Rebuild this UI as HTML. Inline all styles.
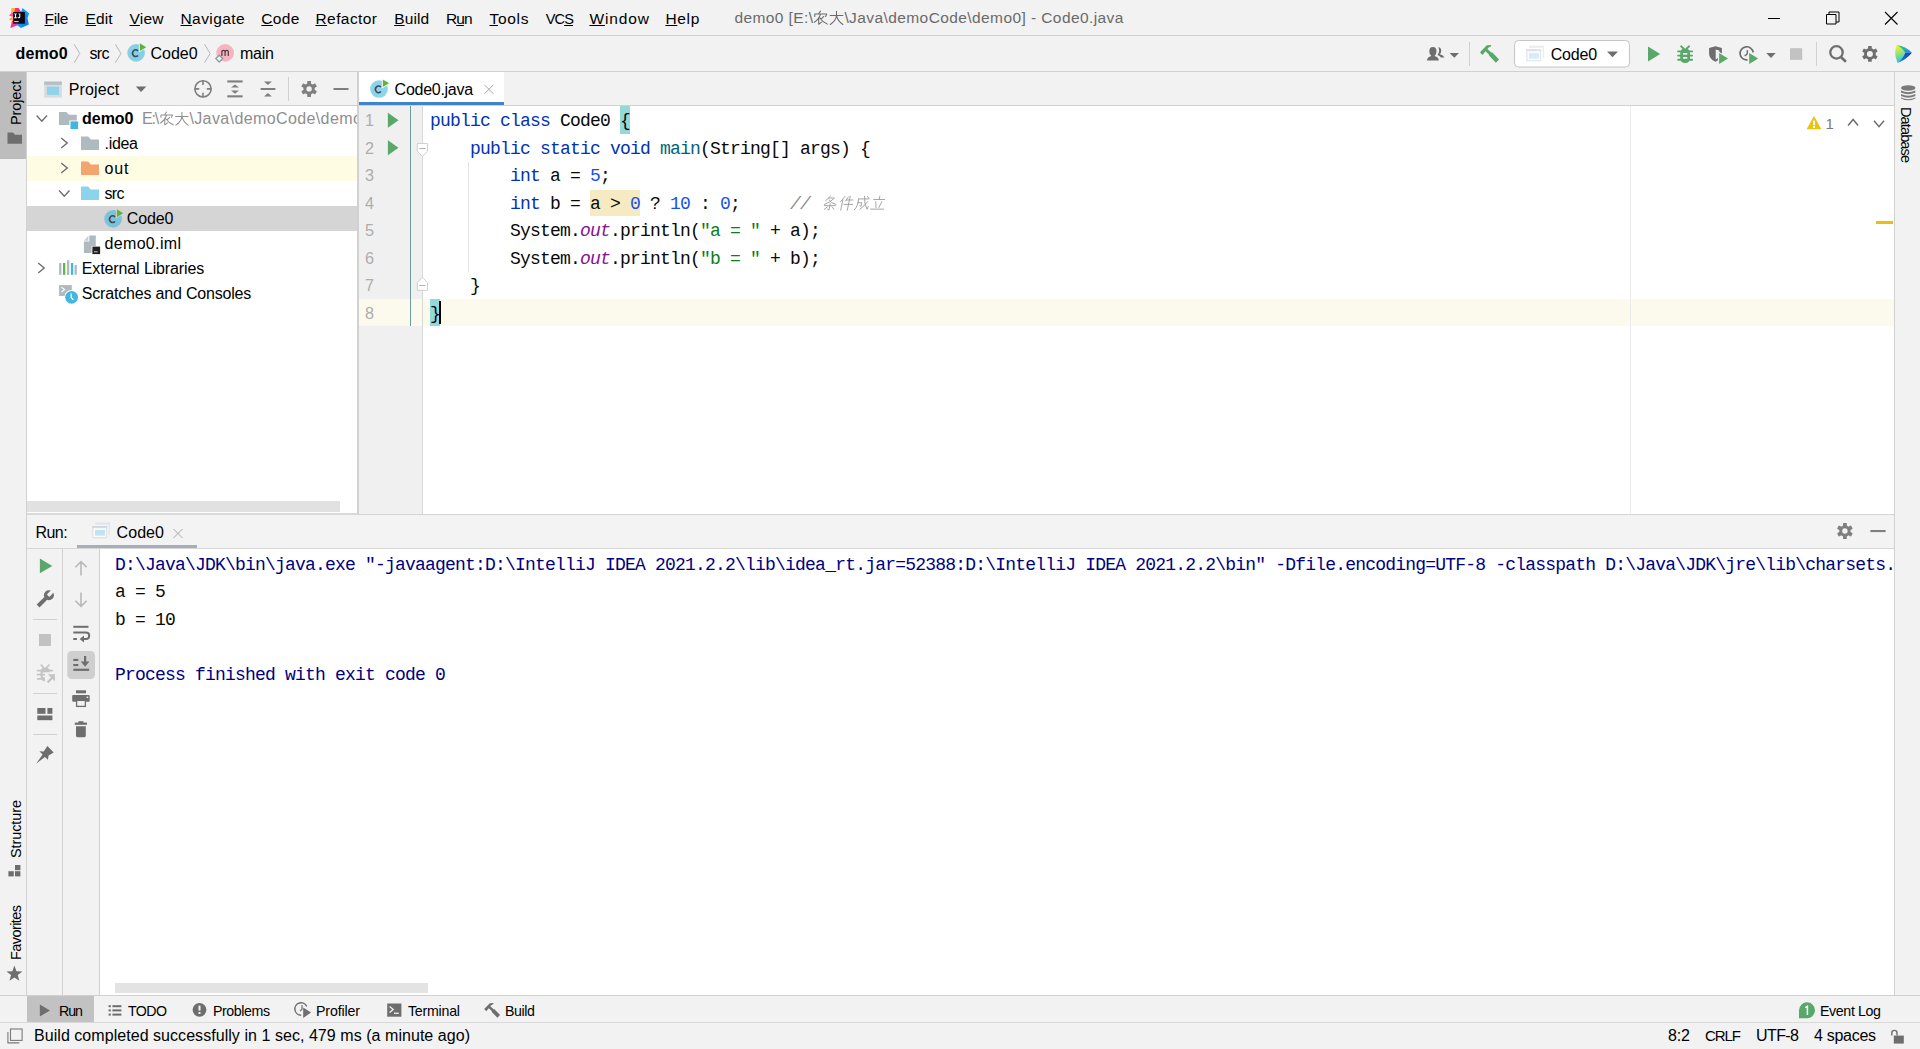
<!DOCTYPE html>
<html><head><meta charset="utf-8"><title>demo0 - Code0.java</title>
<style>
html,body{margin:0;padding:0;}
body{width:1920px;height:1049px;overflow:hidden;background:#f2f2f2;position:relative;font-family:"Liberation Sans",sans-serif;}
.b{position:absolute;}
.t{position:absolute;white-space:pre;line-height:20px;font-family:"Liberation Sans",sans-serif;}
svg{position:absolute;overflow:visible;}
u{text-decoration:underline;text-underline-offset:1px;text-decoration-thickness:1px;}
</style></head>
<body>
<div class="b" style="left:0px;top:0px;width:1920px;height:1049px;background:#f2f2f2;"></div>
<div class="b" style="left:0px;top:35px;width:1920px;height:1px;background:#d1d1d1;"></div>
<div class="b" style="left:0px;top:71px;width:1920px;height:1px;background:#d1d1d1;"></div>
<div class="b" style="left:0px;top:72px;width:27px;height:924px;background:#f2f2f2;"></div>
<div class="b" style="left:0px;top:72px;width:27px;height:87px;background:#bdbdbd;"></div>
<div class="b" style="left:26px;top:72px;width:1px;height:924px;background:#d1d1d1;"></div>
<div class="b" style="left:27px;top:72px;width:331px;height:443px;background:#f2f2f2;"></div>
<div class="b" style="left:27px;top:105px;width:331px;height:1px;background:#d1d1d1;"></div>
<div class="b" style="left:27px;top:106px;width:331px;height:394px;background:#fff;"></div>
<div class="b" style="left:27px;top:156px;width:331px;height:25px;background:#fffce4;"></div>
<div class="b" style="left:27px;top:206px;width:331px;height:25px;background:#d5d5d5;"></div>
<div class="b" style="left:27px;top:500px;width:331px;height:13px;background:#fff;"></div>
<div class="b" style="left:27px;top:501px;width:313px;height:11px;background:#e1e1e1;"></div>
<div class="b" style="left:357px;top:72px;width:2px;height:443px;background:#d1d1d1;"></div>
<div class="b" style="left:359px;top:72px;width:1535px;height:34px;background:#f2f2f2;"></div>
<div class="b" style="left:359px;top:72px;width:145px;height:33px;background:#fff;"></div>
<div class="b" style="left:359px;top:102px;width:145px;height:3.6px;background:#4083c9;"></div>
<div class="b" style="left:359px;top:105px;width:1535px;height:1px;background:#d1d1d1;"></div>
<div class="b" style="left:359px;top:106px;width:1535px;height:409px;background:#fff;"></div>
<div class="b" style="left:359px;top:106px;width:63px;height:409px;background:#f0f0f0;"></div>
<div class="b" style="left:359px;top:298.5px;width:1535px;height:27.5px;background:#fcfaed;"></div>
<div class="b" style="left:359px;top:298.5px;width:63px;height:27.5px;background:#fcfaed;"></div>
<div class="b" style="left:410px;top:106px;width:1px;height:220px;background:#6b9c9a;"></div>
<div class="b" style="left:422px;top:106px;width:1px;height:409px;background:#d9d9d9;"></div>
<div class="b" style="left:1630px;top:106px;width:1px;height:409px;background:#ececec;"></div>
<div class="b" style="left:1876px;top:221px;width:17px;height:3px;background:#e9bf0b;"></div>
<div class="b" style="left:1894px;top:72px;width:26px;height:924px;background:#f2f2f2;"></div>
<div class="b" style="left:1894px;top:72px;width:1px;height:924px;background:#d1d1d1;"></div>
<div class="b" style="left:27px;top:513px;width:331px;height:2px;background:#d9d9d9;"></div>
<div class="b" style="left:359px;top:514px;width:1535px;height:1px;background:#d4d4d4;"></div>
<div class="b" style="left:27px;top:515px;width:1867px;height:33px;background:#f3f3f3;"></div>
<div class="b" style="left:76.5px;top:545px;width:120px;height:3.3px;background:#a6aebd;"></div>
<div class="b" style="left:27px;top:548px;width:1867px;height:1px;background:#d6d6d6;"></div>
<div class="b" style="left:27px;top:549px;width:1867px;height:446px;background:#fff;"></div>
<div class="b" style="left:27px;top:549px;width:35px;height:446px;background:#f2f2f2;"></div>
<div class="b" style="left:62px;top:549px;width:1px;height:446px;background:#d1d1d1;"></div>
<div class="b" style="left:63px;top:549px;width:36px;height:446px;background:#f2f2f2;"></div>
<div class="b" style="left:99px;top:549px;width:1px;height:446px;background:#d1d1d1;"></div>
<div class="b" style="left:115px;top:983px;width:313px;height:10px;background:#e3e3e3;"></div>
<div class="b" style="left:0px;top:995px;width:1920px;height:1px;background:#d1d1d1;"></div>
<div class="b" style="left:0px;top:996px;width:1920px;height:26px;background:#f2f2f2;"></div>
<div class="b" style="left:27px;top:996px;width:67px;height:26px;background:#c2c2c2;"></div>
<div class="b" style="left:0px;top:1022px;width:1920px;height:2px;background:#dadada;"></div>
<div class="b" style="left:0px;top:1023px;width:1920px;height:26px;background:#f2f2f2;"></div>
<div class="b" style="left:620px;top:106px;width:10px;height:27.5px;background:#93d9d9;"></div>
<div class="b" style="left:430px;top:298.5px;width:10px;height:27.5px;background:#93d9d9;"></div>
<div class="b" style="left:590px;top:190px;width:50px;height:26px;background:#f5eac1;"></div>
<div class="b" style="left:439.3px;top:301px;width:2px;height:23px;background:#000;"></div>
<div class="b" style="left:468px;top:162px;width:1px;height:110px;background:#e4e4e4;"></div>
<div class="b" style="left:100px;top:548px;width:1793px;height:440px;overflow:hidden;"><span class="t" style="left:15px;top:6.50px;font-family:'Liberation Mono',monospace;font-size:18px;letter-spacing:-0.8px;color:#00007f;">D:\Java\JDK\bin\java.exe "-javaagent:D:\IntelliJ IDEA 2021.2.2\lib\idea_rt.jar=52388:D:\IntelliJ IDEA 2021.2.2\bin" -Dfile.encoding=UTF-8 -classpath D:\Java\JDK\jre\lib\charsets.jar;</span></div>
<svg style="left:0;top:0" width="1920" height="1049" viewBox="0 0 1920 1049"><defs>
<linearGradient id="lg1" x1="0" y1="0" x2="1" y2="0"><stop offset="0" stop-color="#ff2d6f"/><stop offset="1" stop-color="#e83ae0"/></linearGradient><linearGradient id="lg1o" x1="0" y1="0" x2="1" y2="0"><stop offset="0" stop-color="#ff7a1a"/><stop offset="1" stop-color="#ffcf1f"/></linearGradient>
<linearGradient id="lg2" x1="0.9" y1="0" x2="0.3" y2="1"><stop offset="0" stop-color="#0adfff"/><stop offset=".3" stop-color="#0893fb"/><stop offset=".7" stop-color="#087cfa"/><stop offset="1" stop-color="#0a9dff"/></linearGradient>
<linearGradient id="lg3" x1="0" y1="0" x2="0" y2="1"><stop offset="0" stop-color="#ff45c8"/><stop offset=".5" stop-color="#ffb300"/><stop offset="1" stop-color="#ff2d6f"/></linearGradient>
<linearGradient id="lg4" x1="0.3" y1="0" x2="0.5" y2="1"><stop offset="0" stop-color="#fbf22a"/><stop offset=".5" stop-color="#8fe07a"/><stop offset="1" stop-color="#14c4f0"/></linearGradient>
<linearGradient id="lg5" x1="0" y1="0" x2="1" y2="1"><stop offset="0" stop-color="#35d36a"/><stop offset=".55" stop-color="#1fb0b8"/><stop offset="1" stop-color="#1a7ee6"/></linearGradient>
<linearGradient id="lg6" x1="1" y1="0" x2="0" y2="1"><stop offset="0" stop-color="#1d3fae"/><stop offset=".6" stop-color="#1467d2"/><stop offset="1" stop-color="#0fa0ea"/></linearGradient>
</defs>
<polygon points="11.5,8 15.2,8 14,12.5 11,13.6" fill="#ffb02e"/>
<polygon points="15.2,8 18.5,8 21.2,12 13.2,12.6 14,12.5" fill="#ff2d78"/>
<polygon points="11,13.6 14,12.3 14,17.2 9,15.6" fill="#ff45bf"/>
<polygon points="9,19.6 11.6,17.4 14,17 14,21.8 12,20.4" fill="url(#lg1o)"/>
<polygon points="12,20.4 14,21.6 14,23 18.5,23.4 17,25.6 10.4,27.9" fill="url(#lg1)"/>
<polygon points="22.5,8 29.2,13.2 27.5,18 28.8,24.4 21,28 16.8,25 18,23 24,23 24,12 21.2,12" fill="url(#lg2)"/>
<rect x="13.2" y="12" width="11.7" height="11.7" fill="#100810"/>
<path d="M14.2,13.4h2.6v.9h-.75v3h.75v.9h-2.6v-.9h.75v-3h-.75z M18.4,13.4h1.9v3.3q0,1.5-1.5,1.5q-.9,0-1.4-.7l.6-.6q.3.4.75.4q.55,0,.55-.7v-2.3h-.9z" fill="#fff"/>
<rect x="14.2" y="21.2" width="4.4" height=".9" fill="#fff"/>
<path d="M1768,18.5h12" stroke="#000" stroke-width="1"/>
<path d="M1826.5,14.5h9.5v9.5h-9.5z M1829,14.5v-2.5h10v10h-3" fill="none" stroke="#000" stroke-width="1"/>
<path d="M1885,12l12.5,12.5M1897.5,12l-12.5,12.5" stroke="#000" stroke-width="1.1"/>
<polyline points="74.2,44.3 79.8,53.5 74.2,62.7" fill="none" stroke="#b3b7ba" stroke-width="1"/>
<polyline points="115.4,44.3 121.0,53.5 115.4,62.7" fill="none" stroke="#b3b7ba" stroke-width="1"/>
<polyline points="204.5,44.3 210.10000000000002,53.5 204.5,62.7" fill="none" stroke="#b3b7ba" stroke-width="1"/>
<circle cx="136.1" cy="52.9" r="8.8" fill="#40b6e0" fill-opacity=".6"/><path d="M137.97,50.90 A3.1,3.4 0 1 0 137.97,55.50" fill="none" stroke="#3d4a55" stroke-width="1.5"/><polygon points="139.0,41.9 147.7,47.199999999999996 139.0,52.3" fill="#f2f2f2"/><polygon points="139.9,43.3 146.2,47.199999999999996 139.9,51.0" fill="#5fb336"/>
<circle cx="225.2" cy="52.9" r="8.8" fill="#f98b9e" fill-opacity=".6"/>
<path d="M221.9,56v-5.6 M221.9,52 q.3,-1.6 1.7,-1.6 q1.5,0 1.5,1.7 v3.9 M225.1,52 q.3,-1.6 1.7,-1.6 q1.5,0 1.5,1.7 v3.9" fill="none" stroke="#4a3a40" stroke-width="1.2"/>
<path d="M219.2,55.2l3.4,3.4l-3.4,3.4l-3.4,-3.4z" fill="#f2f2f2" stroke="#8a9aa5" stroke-width="1.3"/>
<path d="M1427,60.6 q0,-3.5 4.3,-4.6 q-2,-1.6 -2,-4.8 q0,-4.3 3.6,-4.3 q3.6,0 3.6,4.3 q0,3.2 -2,4.8 q4.3,1.1 4.3,4.6 z" fill="#6e6e6e"/>
<path d="M1438.3,47.2 q2.9,.2 2.9,3.6 q0,2.2 -1.3,3.4 q3.6,1 4.6,3.4 h-3.6 q-.9,-1.9 -3.4,-2.6 q1.6,-1.6 1.6,-4.2 q0,-2.2 -.8,-3.6z" fill="#6e6e6e"/>
<polygon points="1449.6,53 1459,53 1454.3,57.8" fill="#6e6e6e"/>
<rect x="1469" y="42" width="1" height="24" fill="#d1d1d1"/>
<g transform="translate(1480,45) scale(1.0)" fill="#59a869"><polygon points="0,7.3 6.8,0.2 11.1,0.1 11.1,1.3 7.9,3 7.6,4.2 11.3,7.6 12.4,7.6 19.1,14.6 15.9,17.7 9.2,10.7 8.9,9.4 5.5,6.2 2.4,9.9"/></g>
<rect x="1514.5" y="40.5" width="115" height="26.5" rx="4" fill="#fff" stroke="#c4c4c4"/>
<path d="M1529.2,45.5h14.8v12.2h-1.2v-10h-13.6z" fill="#e9edf0"/><rect x="1526.2" y="49.1" width="15" height="12.3" fill="#e3e8ec"/><rect x="1526.2" y="49.1" width="15" height="2.2" fill="#dde3e8"/><rect x="1527.5" y="51.3" width="12.4" height="8.8" fill="#fdfdfd"/><rect x="1529.0" y="52.9" width="9.9" height="5.9" fill="#d6edf7"/>
<polygon points="1607,51.5 1618,51.5 1612.5,57.3" fill="#6e6e6e"/>
<polygon points="1648,46.5 1660.2,54 1648,61.5" fill="#59a869"/>
<g transform="translate(1685.1,48.4)" fill="#59a869" stroke="#59a869" stroke-linecap="round"><path d="M-4.9,5.4 q0,-5.4 4.9,-5.4 q4.9,0 4.9,5.4 v3.6 q0,5.7 -4.9,5.7 q-4.9,0 -4.9,-5.7z" stroke="none"/><path d="M-4,-2.1l2.6,2.4 M4,-2.1l-2.6,2.4 M-7,3h4 M7,3h-4 M-7,7.2h4 M7,7.2h-4 M-7,11.4h4 M7,11.4h-4" stroke-width="1.9" fill="none"/></g><rect x="1682.8999999999999" y="53.0" width="4.4" height="1.7" fill="#f2f2f2"/><rect x="1682.8999999999999" y="57.0" width="4.4" height="1.75" fill="#f2f2f2"/>
<path d="M1709.1,48.1 L1715.5,46.2 L1721.9,48.1 V54 Q1721.9,59 1715.5,61.7 Q1709.1,59 1709.1,54z" fill="#6e6e6e"/>
<path d="M1715.7,49.6 L1719.3,50.5 V55 Q1719,58 1715.7,59.4z" fill="#f2f2f2"/>
<polygon points="1717.9,50.9 1729.8,58.4 1717.9,66" fill="#f2f2f2"/>
<polygon points="1719.1,53 1728,58.4 1719.1,63.9" fill="#59a869"/>
<path d="M1753.2,52.4 A6.6,6.6 0 1 0 1747.6,59.9" fill="none" stroke="#6e6e6e" stroke-width="1.7"/>
<path d="M1747.3,50.2v3q0,1.4 -2.7,2.6" fill="none" stroke="#6e6e6e" stroke-width="1.5"/>
<polygon points="1749.2,53 1758.1,58.4 1749.2,63.9" fill="#59a869"/>
<polygon points="1766.2,53.1 1775.7,53.1 1771,58" fill="#6e6e6e"/>
<rect x="1790" y="48.2" width="12.2" height="11.7" fill="#c2c2c2"/>
<rect x="1816" y="42" width="1" height="24" fill="#d1d1d1"/>
<circle cx="1836.5" cy="52.4" r="6.2" fill="none" stroke="#6e6e6e" stroke-width="2.3"/><path d="M1840.9,57.1l5,4.7" stroke="#6e6e6e" stroke-width="2.7"/>
<g transform="translate(1869.9,53.9)" fill="#6e6e6e"><circle r="4.45" fill="none" stroke="#6e6e6e" stroke-width="2.9000000000000004"/><rect x="-1.85" y="-7.9" width="3.7" height="2.8" rx="0.6" transform="rotate(0.0)"/><rect x="-1.85" y="-7.9" width="3.7" height="2.8" rx="0.6" transform="rotate(60.0)"/><rect x="-1.85" y="-7.9" width="3.7" height="2.8" rx="0.6" transform="rotate(120.0)"/><rect x="-1.85" y="-7.9" width="3.7" height="2.8" rx="0.6" transform="rotate(180.0)"/><rect x="-1.85" y="-7.9" width="3.7" height="2.8" rx="0.6" transform="rotate(240.0)"/><rect x="-1.85" y="-7.9" width="3.7" height="2.8" rx="0.6" transform="rotate(300.0)"/></g>
<path d="M1896.6,44.9 Q1893.3,53 1897.6,62.9 Q1903,58.5 1905.2,52.8 Q1902,47.5 1896.6,44.9z" fill="url(#lg4)"/>
<path d="M1896.6,44.9 Q1906,46 1911.9,52.8 L1905.2,52.8 Q1902,47.5 1896.6,44.9z" fill="url(#lg5)"/>
<path d="M1911.9,52.8 Q1906,60 1897.6,62.9 Q1903,58.5 1905.2,52.8z" fill="url(#lg6)"/>
<path d="M7.5,132.5h5.6l2,2.3h6.9v9H7.5z" fill="#6e6e6e"/>
<rect x="15" y="865" width="5.4" height="5.2" fill="#6e6e6e"/><rect x="8.4" y="871.2" width="5.4" height="5.2" fill="#6e6e6e"/><rect x="15" y="871.2" width="5.4" height="5.2" fill="#6e6e6e"/>
<polygon points="14.40,965.60 16.46,971.17 22.39,971.40 17.73,975.08 19.34,980.80 14.40,977.50 9.46,980.80 11.07,975.08 6.41,971.40 12.34,971.17" fill="#6e6e6e"/>
<rect x="44.2" y="81.6" width="17.6" height="16" fill="#d5dbdf"/><rect x="44.2" y="81.6" width="17.6" height="3.2" fill="#b4bec5"/><rect x="47" y="86.8" width="12" height="8" fill="#8cd3ec"/>
<polygon points="135.8,86.6 146.3,86.6 141,92" fill="#6e6e6e"/>
<circle cx="203" cy="88.9" r="8.1" fill="none" stroke="#7f7f7f" stroke-width="1.6"/><path d="M203,80.5v4.6 M203,97.3v-4.6 M194.6,88.9h4.6 M211.4,88.9h-4.6" stroke="#7f7f7f" stroke-width="1.6"/>
<rect x="227.3" y="80.4" width="15.3" height="2.1" fill="#7f7f7f"/><rect x="227.3" y="95.3" width="15.3" height="2.1" fill="#7f7f7f"/><polygon points="231,87.6 235,84.6 239,87.6" fill="#7f7f7f"/><polygon points="231,90.6 235,93.8 239,90.6" fill="#7f7f7f"/>
<rect x="260.6" y="88" width="14.8" height="2" fill="#7f7f7f"/><polygon points="263.9,81.4 271.9,81.4 267.9,85.1" fill="#7f7f7f"/><polygon points="263.9,96.6 271.9,96.6 267.9,92.9" fill="#7f7f7f"/>
<rect x="288" y="77" width="1" height="24" fill="#d1d1d1"/>
<g transform="translate(309.1,88.9)" fill="#7f7f7f"><circle r="4.2" fill="none" stroke="#7f7f7f" stroke-width="3.0"/><rect x="-1.9" y="-8" width="3.8" height="3.0999999999999996" rx="0.6" transform="rotate(0.0)"/><rect x="-1.9" y="-8" width="3.8" height="3.0999999999999996" rx="0.6" transform="rotate(60.0)"/><rect x="-1.9" y="-8" width="3.8" height="3.0999999999999996" rx="0.6" transform="rotate(120.0)"/><rect x="-1.9" y="-8" width="3.8" height="3.0999999999999996" rx="0.6" transform="rotate(180.0)"/><rect x="-1.9" y="-8" width="3.8" height="3.0999999999999996" rx="0.6" transform="rotate(240.0)"/><rect x="-1.9" y="-8" width="3.8" height="3.0999999999999996" rx="0.6" transform="rotate(300.0)"/></g>
<rect x="333.5" y="88" width="15" height="2" fill="#7f7f7f"/>
<polyline points="36.599999999999994,115.5 41.8,121.30000000000001 47.0,115.5" fill="none" stroke="#6e6e6e" stroke-width="1.4"/>
<polyline points="61.2,138 67.2,143 61.2,148" fill="none" stroke="#6e6e6e" stroke-width="1.4"/>
<polyline points="61.2,163 67.2,168 61.2,173" fill="none" stroke="#6e6e6e" stroke-width="1.4"/>
<polyline points="59.099999999999994,190.5 64.3,196.3 69.5,190.5" fill="none" stroke="#6e6e6e" stroke-width="1.4"/>
<polyline points="38.2,263 44.2,268 38.2,273" fill="none" stroke="#6e6e6e" stroke-width="1.4"/>
<path d="M59,111.9h7.4l2.5,2.8H76.8V120.4H69.4V125H59z" fill="#9aa7b0" fill-opacity=".8"/>
<rect x="70.5" y="121.4" width="7.6" height="7.6" fill="#40b6e0"/>
<path d="M81,136.5h7.2l2.5,2.9H99V150.0H81z" fill="#9aa7b0" fill-opacity="0.8"/>
<path d="M81,161.5h7.2l2.5,2.9H99V175.0H81z" fill="#f4a46f" fill-opacity="1"/>
<path d="M81,186.5h7.2l2.5,2.9H99V200.0H81z" fill="#40b6e0" fill-opacity="0.6"/>
<circle cx="113.1" cy="218.9" r="8.8" fill="#40b6e0" fill-opacity=".6"/><path d="M114.97,216.90 A3.1,3.4 0 1 0 114.97,221.50" fill="none" stroke="#3d4a55" stroke-width="1.5"/><polygon points="116.0,207.9 124.69999999999999,213.20000000000002 116.0,218.3" fill="#d5d5d5"/><polygon points="116.89999999999999,209.3 123.19999999999999,213.20000000000002 116.89999999999999,217.0" fill="#5fb336"/>
<path d="M89.3,235.4H95.8V246H91.6V252.9H83.9V241.6H89.3z" fill="#9aa7b0" fill-opacity=".8"/><path d="M88.4,235.6V240.7H83.9z" fill="#9aa7b0" fill-opacity=".55"/>
<rect x="92.4" y="246.6" width="7.7" height="7.5" fill="#231f20"/><rect x="94" y="251.2" width="3.6" height="1.1" fill="#bbb"/>
<rect x="59.1" y="263" width="2.3" height="11.800000000000011" fill="#aeb9c0"/>
<rect x="63" y="263" width="2.3" height="11.800000000000011" fill="#62b543"/>
<rect x="67" y="260.2" width="2.3" height="14.600000000000023" fill="#aeb9c0"/>
<rect x="70.9" y="263" width="2.3" height="11.800000000000011" fill="#40b6e0"/>
<rect x="74.5" y="265" width="2.3" height="9.800000000000011" fill="#aeb9c0"/>
<rect x="59.1" y="285.1" width="12.7" height="10.9" fill="#aeb9c0"/><polyline points="61.4,287.2 64.6,289.6 61.4,292" fill="none" stroke="#fff" stroke-width="1.1"/>
<circle cx="71.6" cy="297.3" r="7.4" fill="#fff"/><circle cx="71.6" cy="297.3" r="6.4" fill="#40b6e0"/><path d="M71.2,293.4v4l2.2,2.4" fill="none" stroke="#fff" stroke-width="1.3"/>
<circle cx="379" cy="89" r="8.8" fill="#40b6e0" fill-opacity=".6"/><path d="M380.87,87.00 A3.1,3.4 0 1 0 380.87,91.60" fill="none" stroke="#3d4a55" stroke-width="1.5"/><polygon points="381.9,78 390.6,83.3 381.9,88.4" fill="#fff"/><polygon points="382.8,79.4 389.1,83.3 382.8,87.1" fill="#5fb336"/>
<path d="M484.4,84.8l9,9 M493.4,84.8l-9,9" stroke="#a8a8a8" stroke-width="1"/>
<polygon points="387.9,112.8 398.5,120.3 387.9,127.8" fill="#59a869"/>
<polygon points="387.9,140.2 398.5,147.7 387.9,155.2" fill="#59a869"/>
<path d="M417.3,143.5h10.2v7.6l-5.1,5.6l-5.1,-5.6z" fill="#fff" stroke="#d0d0d0" stroke-width="1"/><path d="M419.3,148.5h6.2" stroke="#b0b0b0" stroke-width="1"/>
<path d="M417.3,290.3h10.2v-7.6l-5.1,-5.6l-5.1,5.6z" fill="#fff" stroke="#d0d0d0" stroke-width="1"/><path d="M419.3,285.5h6.2" stroke="#b0b0b0" stroke-width="1"/>
<path d="M1814,115.9l7.4,13.4h-14.8z" fill="#e9c30f"/><rect x="1813.1" y="120.6" width="1.9" height="4.6" fill="#fff"/><rect x="1813.1" y="126.1" width="1.9" height="1.9" fill="#fff"/>
<polyline points="1848.1,125.4 1853.1,119.4 1858.1,125.4" fill="none" stroke="#6e6e6e" stroke-width="1.5"/>
<polyline points="1874,120.7 1879,126.7 1884,120.7" fill="none" stroke="#6e6e6e" stroke-width="1.5"/>
<g fill="#7a7a7a"><ellipse cx="1908.2" cy="88" rx="7.2" ry="2.7"/><path d="M1901,90.4q7.2,3.6 14.4,0v2q-7.2,3.6 -14.4,0z M1901,93.9q7.2,3.6 14.4,0v2q-7.2,3.6 -14.4,0z M1901,97.4q7.2,3.6 14.4,0v1q-7.2,3.8 -14.4,0z"/></g>
<path d="M95.2,522.4h14.8v12.2h-1.2v-10h-13.6z" fill="#e0e5e9"/><rect x="92.2" y="526.0" width="15" height="12.3" fill="#dce2e6"/><rect x="92.2" y="526.0" width="15" height="2.2" fill="#d3dadf"/><rect x="93.5" y="528.1999999999999" width="12.4" height="8.8" fill="#fdfdfd"/><rect x="95.0" y="529.8" width="9.9" height="5.9" fill="#bfe3ef"/>
<path d="M173.5,529l9,9 M182.5,529l-9,9" stroke="#a8a8a8" stroke-width="1"/>
<g transform="translate(1844.9,531)" fill="#7f7f7f"><circle r="4.2" fill="none" stroke="#7f7f7f" stroke-width="3.0"/><rect x="-1.9" y="-8" width="3.8" height="3.0999999999999996" rx="0.6" transform="rotate(0.0)"/><rect x="-1.9" y="-8" width="3.8" height="3.0999999999999996" rx="0.6" transform="rotate(60.0)"/><rect x="-1.9" y="-8" width="3.8" height="3.0999999999999996" rx="0.6" transform="rotate(120.0)"/><rect x="-1.9" y="-8" width="3.8" height="3.0999999999999996" rx="0.6" transform="rotate(180.0)"/><rect x="-1.9" y="-8" width="3.8" height="3.0999999999999996" rx="0.6" transform="rotate(240.0)"/><rect x="-1.9" y="-8" width="3.8" height="3.0999999999999996" rx="0.6" transform="rotate(300.0)"/></g>
<rect x="1870.4" y="530" width="15.2" height="2.1" fill="#7f7f7f"/>
<polygon points="39.9,558.6 52.3,566 39.9,573.3" fill="#59a869"/>
<circle cx="48.9" cy="595.3" r="5" fill="#6e6e6e"/><polygon points="36.7,604.6 39.5,607.6 47.4,599.6 44.4,597" fill="#6e6e6e"/><polygon points="46.9,594.6 49.4,597 55.8,590 53.3,587.7" fill="#f2f2f2"/>
<rect x="33" y="619" width="24" height="1" fill="#d1d1d1"/>
<rect x="39" y="634" width="12" height="12" fill="#c2c2c2"/>
<g fill="#c4c4c4" stroke="#c4c4c4" stroke-linecap="round"><path d="M40.6,671.5Q40.6,667.4 45.15,667.4Q49.7,667.4 49.7,671.5L49.7,672.2L44.9,672.2L44.9,681.7Q40.6,680.5 40.6,676z" stroke="none"/><path d="M41.3,665.2l2.2,2.3 M48.9,665.2l-2.3,2.3 M37.6,670.6h3.6 M37.6,674.7h3.6 M37.6,678.8h3.6 M49,670.6h3.2" fill="none" stroke-width="1.7"/><polygon points="47.9,674.2 54.9,674.2 54.9,681.5 52.6,679.1 48.4,683.3 46.8,681.6 51,677.4" stroke="none"/></g>
<rect x="42.7" y="672.4" width="2.2" height="1.5" fill="#f2f2f2"/><rect x="42.7" y="675.6" width="2.2" height="1.7" fill="#f2f2f2"/>
<rect x="33" y="693" width="24" height="1" fill="#d1d1d1"/>
<rect x="37.3" y="708" width="8.2" height="5.8" fill="#6e6e6e"/><rect x="47.4" y="708" width="5" height="5.8" fill="#6e6e6e"/><rect x="37.3" y="715.5" width="15.1" height="4.7" fill="#6e6e6e"/>
<rect x="33" y="734" width="24" height="1" fill="#d1d1d1"/>
<polygon points="47.4,745.9 53.7,752.4 48.6,755.6 47.9,759.7 44.9,756.9 36.1,763.7 42.6,754.6 39.4,751.3 43.7,751.4" fill="#6e6e6e"/>
<path d="M81,575.5v-13.4 M75.4,567.3l5.6,-5.6l5.6,5.6" fill="none" stroke="#b8b8b8" stroke-width="1.6"/>
<path d="M81,592.6v13.4 M75.4,600.8l5.6,5.6l5.6,-5.6" fill="none" stroke="#b8b8b8" stroke-width="1.6"/>
<path d="M73.3,626.8h15.2" stroke="#6e6e6e" stroke-width="2"/><path d="M73.3,632.6h12.6q3.3,0 3.3,3.2q0,3.2 -3.3,3.2h-3" fill="none" stroke="#6e6e6e" stroke-width="2"/><polygon points="84,635.6 84,642.4 79.6,639" fill="#6e6e6e"/><rect x="73.3" y="638" width="3.6" height="2" fill="#6e6e6e"/>
<rect x="67.3" y="651" width="27.7" height="28" rx="4.5" fill="#cfcfcf"/>
<rect x="73.3" y="658.9" width="5" height="2.1" fill="#6e6e6e"/><rect x="73.3" y="664" width="5" height="2.1" fill="#6e6e6e"/><rect x="73.3" y="668.7" width="15.8" height="2.2" fill="#6e6e6e"/><path d="M85.1,656v7" stroke="#6e6e6e" stroke-width="2.2"/><polygon points="80.8,661.6 89.4,661.6 85.1,666.8" fill="#6e6e6e"/>
<rect x="76" y="690.3" width="10" height="3" fill="#6e6e6e"/><rect x="72.2" y="695" width="17.5" height="6.8" rx="1" fill="#6e6e6e"/><rect x="76.6" y="700.4" width="8.8" height="6" fill="#f2f2f2" stroke="#6e6e6e" stroke-width="1.3"/><rect x="86.6" y="696.6" width="1.6" height="1.4" fill="#f2f2f2"/>
<rect x="74.8" y="722.6" width="12.2" height="2.2" fill="#6e6e6e"/><rect x="78.4" y="721.2" width="5" height="2" fill="#6e6e6e"/><path d="M76,726.2h9.8v9.6q0,1.4 -1.4,1.4h-7q-1.4,0 -1.4,-1.4z" fill="#6e6e6e"/>
<polygon points="39.8,1004.5 50,1010.5 39.8,1016.6" fill="#6e6e6e"/>
<rect x="108.6" y="1005.2" width="2.2" height="2" fill="#6e6e6e"/><rect x="112.4" y="1005.2" width="9" height="2" fill="#6e6e6e"/>
<rect x="108.6" y="1009.4" width="2.2" height="2" fill="#6e6e6e"/><rect x="112.4" y="1009.4" width="9" height="2" fill="#6e6e6e"/>
<rect x="108.6" y="1013.6" width="2.2" height="2" fill="#6e6e6e"/><rect x="112.4" y="1013.6" width="9" height="2" fill="#6e6e6e"/>
<circle cx="199.5" cy="1009.8" r="6.9" fill="#6e6e6e"/><rect x="198.5" y="1005.6" width="2" height="5" fill="#f2f2f2"/><rect x="198.5" y="1012" width="2" height="2" fill="#f2f2f2"/>
<path d="M306.8,1006.6 a6.2,6.2 0 1 0 -5.6,8.6" fill="none" stroke="#6e6e6e" stroke-width="1.4"/><path d="M302,1005v4.2l-2,2" fill="none" stroke="#6e6e6e" stroke-width="1.2"/><polygon points="303.2,1007.6 311,1012.6 303.2,1018" fill="#6e6e6e"/>
<rect x="387.2" y="1003.5" width="14.2" height="13.2" fill="#6e6e6e"/><polyline points="389.6,1006.4 393.2,1009.4 389.6,1012.4" fill="none" stroke="#f2f2f2" stroke-width="1.3"/><rect x="394" y="1012.6" width="4.8" height="1.3" fill="#f2f2f2"/>
<g transform="translate(484.2,1003) scale(0.83)" fill="#6e6e6e"><polygon points="0,7.3 6.8,0.2 11.1,0.1 11.1,1.3 7.9,3 7.6,4.2 11.3,7.6 12.4,7.6 19.1,14.6 15.9,17.7 9.2,10.7 8.9,9.4 5.5,6.2 2.4,9.9"/></g>
<circle cx="1807" cy="1010.3" r="8" fill="#59a869"/><path d="M1799,1010.3v8h8z" fill="#59a869"/><path d="M1805.3,1007.6l2.1,-1.2v8.6" fill="none" stroke="#fff" stroke-width="1.5"/>
<rect x="10.5" y="1029" width="11.6" height="11.4" fill="#f2f2f2" stroke="#7a7a7a" stroke-width="1.1"/><path d="M7.9,1032v10.9h11.4" fill="none" stroke="#7a7a7a" stroke-width="1.1"/>
<rect x="1893.8" y="1035.6" width="10" height="8" fill="#6e6e6e"/><path d="M1891.8,1035.6v-2.6q0,-2.6 2.6,-2.6q2.6,0 2.6,2.6v2.6" fill="none" stroke="#6e6e6e" stroke-width="1.4"/>
<path transform="translate(813.60,10.8) scale(0.9125)" d="M7.6,0.3L5.6,3 M1.3,6.2V3.6H14.3L13.2,6.2 M7.6,3.6Q6,9 0.8,12.6 M5.6,8V14.8L8.6,12.4 M11.2,6.2L8.2,9.2 M6.6,7.6Q10,12.6 15.2,14.6" fill="none" stroke="#6a6a6a" stroke-width="1.15" stroke-linecap="round" stroke-linejoin="round"/><path transform="translate(829.20,10.8) scale(0.9125)" d="M1,5.2H15 M8,0.4V5.2Q7.4,11 1.2,15 M8,5.2Q9.6,11.4 15,15" fill="none" stroke="#6a6a6a" stroke-width="1.15" stroke-linecap="round" stroke-linejoin="round"/>
<path transform="translate(159.80,111.8) scale(0.8875)" d="M7.6,0.3L5.6,3 M1.3,6.2V3.6H14.3L13.2,6.2 M7.6,3.6Q6,9 0.8,12.6 M5.6,8V14.8L8.6,12.4 M11.2,6.2L8.2,9.2 M6.6,7.6Q10,12.6 15.2,14.6" fill="none" stroke="#8e8e8e" stroke-width="1.13" stroke-linecap="round" stroke-linejoin="round"/><path transform="translate(174.80,111.8) scale(0.8875)" d="M1,5.2H15 M8,0.4V5.2Q7.4,11 1.2,15 M8,5.2Q9.6,11.4 15,15" fill="none" stroke="#8e8e8e" stroke-width="1.13" stroke-linecap="round" stroke-linejoin="round"/>
<path transform="translate(821.50,196) translate(0,14.6) skewX(-12) translate(0,-14.6) scale(0.9125)" d="M6.4,0.2L2.2,5.2 M5.2,2.2H11.2Q8,7 1.6,9.4 M5.6,4.2Q9,8 14.6,9.4 M2,10.6H14 M8,8.4V15.4L6.4,14.6 M5.4,12L2.8,14.6 M10.6,12L13.4,14.6" fill="none" stroke="#9a9a9a" stroke-width="0.93" stroke-linecap="round" stroke-linejoin="round"/><path transform="translate(837.50,196) translate(0,14.6) skewX(-12) translate(0,-14.6) scale(0.9125)" d="M5,0.2L1.2,6.4 M3.4,4.4V15.6 M8.6,1L6.6,5.4 M7.4,4.4H14.4 M5.6,9.2H15.2 M10.6,0.2V15.6" fill="none" stroke="#9a9a9a" stroke-width="0.93" stroke-linecap="round" stroke-linejoin="round"/><path transform="translate(853.50,196) translate(0,14.6) skewX(-12) translate(0,-14.6) scale(0.9125)" d="M3,3.2H14.4 M3,3.2V9Q2.8,12.6 0.8,15 M3,7.4H7.2V11.4L5.8,10.8 M8.8,0.2Q10,9 14.6,14.6L15.2,11.6 M13.4,6.2Q11,11 6.6,14.6 M11.8,0.6L13.8,2.2" fill="none" stroke="#9a9a9a" stroke-width="0.93" stroke-linecap="round" stroke-linejoin="round"/><path transform="translate(869.50,196) translate(0,14.6) skewX(-12) translate(0,-14.6) scale(0.9125)" d="M8,0.2V3.4 M2,3.8H14 M4.8,6.4L6.4,12.6 M11.4,6.4L9.6,12.6 M0.8,14.4H15.2" fill="none" stroke="#9a9a9a" stroke-width="0.93" stroke-linecap="round" stroke-linejoin="round"/>
</svg>
<span class="t" style="left:44.5px;top:8.50px;font-size:15.5px;color:#000;letter-spacing:-0.328px;"><u>F</u>ile</span>
<span class="t" style="left:85.5px;top:8.50px;font-size:15.5px;color:#000;letter-spacing:0.094px;"><u>E</u>dit</span>
<span class="t" style="left:129.5px;top:8.50px;font-size:15.5px;color:#000;letter-spacing:0.224px;"><u>V</u>iew</span>
<span class="t" style="left:180.5px;top:8.50px;font-size:15.5px;color:#000;letter-spacing:0.402px;"><u>N</u>avigate</span>
<span class="t" style="left:261.3px;top:8.50px;font-size:15.5px;color:#000;letter-spacing:0.307px;"><u>C</u>ode</span>
<span class="t" style="left:315.5px;top:8.50px;font-size:15.5px;color:#000;letter-spacing:0.415px;"><u>R</u>efactor</span>
<span class="t" style="left:394.2px;top:8.50px;font-size:15.5px;color:#000;letter-spacing:0.129px;"><u>B</u>uild</span>
<span class="t" style="left:446px;top:8.50px;font-size:15.5px;color:#000;letter-spacing:-0.977px;">R<u>u</u>n</span>
<span class="t" style="left:489.5px;top:8.50px;font-size:15.5px;color:#000;letter-spacing:0.703px;"><u>T</u>ools</span>
<span class="t" style="left:545.7px;top:9.00px;font-size:14.6px;color:#000;letter-spacing:-0.908px;">VC<u>S</u></span>
<span class="t" style="left:589.4px;top:8.50px;font-size:15.5px;color:#000;letter-spacing:0.872px;"><u>W</u>indow</span>
<span class="t" style="left:665.4px;top:8.50px;font-size:15.5px;color:#000;letter-spacing:0.703px;"><u>H</u>elp</span>
<span class="t" style="left:734.5px;top:7.50px;font-size:15.5px;color:#6a6a6a;letter-spacing:0.392px;">demo0 [E:\</span>
<span class="t" style="left:844.4px;top:7.50px;font-size:15.5px;color:#6a6a6a;letter-spacing:0.412px;">\Java\demoCode\demo0] - Code0.java</span>
<span class="t" style="left:15.6px;top:43.50px;font-size:16px;color:#000;font-weight:bold;letter-spacing:0.105px;">demo0</span>
<span class="t" style="left:89.5px;top:43.50px;font-size:16px;color:#000;letter-spacing:-0.664px;">src</span>
<span class="t" style="left:150.6px;top:43.50px;font-size:16px;color:#000;letter-spacing:-0.039px;">Code0</span>
<span class="t" style="left:240px;top:43.50px;font-size:16px;color:#000;letter-spacing:-0.229px;">main</span>
<span class="t" style="left:1550.7px;top:44.50px;font-size:16px;color:#000;letter-spacing:-0.164px;">Code0</span>
<span class="t" style="left:68.8px;top:79.50px;font-size:16px;color:#000;letter-spacing:0.117px;">Project</span>
<span class="t" style="left:82px;top:108.50px;font-size:16px;color:#000;font-weight:bold;letter-spacing:-0.020px;">demo0</span>
<span class="t" style="left:142px;top:108.50px;font-size:16px;color:#8e8e8e;letter-spacing:-1.181px;">E:\</span>
<span class="t" style="left:189.4px;top:108.50px;font-size:16px;color:#8e8e8e;letter-spacing:0.388px;width:167.6px;overflow:hidden;">\Java\demoCode\demo0</span>
<span class="t" style="left:104.5px;top:133.50px;font-size:16px;color:#000;letter-spacing:-0.301px;">.idea</span>
<span class="t" style="left:104.5px;top:158.50px;font-size:16px;color:#000;letter-spacing:0.875px;">out</span>
<span class="t" style="left:104.5px;top:183.50px;font-size:16px;color:#000;letter-spacing:-0.664px;">src</span>
<span class="t" style="left:126.8px;top:208.50px;font-size:16px;color:#000;letter-spacing:-0.164px;">Code0</span>
<span class="t" style="left:104.5px;top:233.50px;font-size:16px;color:#000;letter-spacing:0.336px;">demo0.iml</span>
<span class="t" style="left:81.8px;top:258.50px;font-size:16px;color:#000;letter-spacing:-0.118px;">External Libraries</span>
<span class="t" style="left:81.8px;top:283.50px;font-size:16px;color:#000;letter-spacing:-0.188px;">Scratches and Consoles</span>
<span class="t" style="left:394.6px;top:79.50px;font-size:16px;color:#000;letter-spacing:-0.273px;">Code0.java</span>
<span class="t" style="left:20.7px;top:124.5px;transform-origin:0 0;transform:rotate(-90deg) translateY(-15.00px);font-size:14.5px;color:#000;letter-spacing:-0.107px;">Project</span>
<span class="t" style="left:20.7px;top:858px;transform-origin:0 0;transform:rotate(-90deg) translateY(-15.00px);font-size:14.5px;color:#000;letter-spacing:-0.105px;">Structure</span>
<span class="t" style="left:20.7px;top:960px;transform-origin:0 0;transform:rotate(-90deg) translateY(-15.00px);font-size:14.5px;color:#000;letter-spacing:-0.580px;">Favorites</span>
<span class="t" style="left:1900.5px;top:106.8px;transform-origin:0 0;transform:rotate(90deg) translateY(-15.00px);font-size:14.5px;color:#000;letter-spacing:-0.868px;">Database</span>
<span class="t" style="left:1825.5px;top:113.50px;font-size:15px;color:#7a7a7a;">1</span>
<span class="t" style="left:35.6px;top:522.50px;font-size:16px;color:#000;letter-spacing:-0.599px;">Run:</span>
<span class="t" style="left:116.5px;top:522.50px;font-size:16px;color:#000;letter-spacing:0.086px;">Code0</span>
<span class="t" style="left:59px;top:1001.00px;font-size:14.2px;color:#000;letter-spacing:-1.016px;">Run</span>
<span class="t" style="left:128px;top:1001.00px;font-size:14.2px;color:#000;letter-spacing:-0.578px;">TODO</span>
<span class="t" style="left:213px;top:1001.00px;font-size:14.2px;color:#000;letter-spacing:-0.420px;">Problems</span>
<span class="t" style="left:316px;top:1001.00px;font-size:14.2px;color:#000;letter-spacing:-0.136px;">Profiler</span>
<span class="t" style="left:408px;top:1001.00px;font-size:14.2px;color:#000;letter-spacing:-0.232px;">Terminal</span>
<span class="t" style="left:505px;top:1001.00px;font-size:14.2px;color:#000;letter-spacing:-0.391px;">Build</span>
<span class="t" style="left:1820px;top:1001.00px;font-size:14.2px;color:#000;letter-spacing:-0.363px;">Event Log</span>
<span class="t" style="left:34px;top:1025.50px;font-size:16px;color:#000;letter-spacing:0.049px;">Build completed successfully in 1 sec, 479 ms (a minute ago)</span>
<span class="t" style="left:1668px;top:1025.50px;font-size:16px;color:#000;letter-spacing:-0.125px;">8:2</span>
<span class="t" style="left:1705px;top:1025.50px;font-size:15px;color:#000;letter-spacing:-1.057px;">CRLF</span>
<span class="t" style="left:1756px;top:1025.50px;font-size:16px;color:#000;letter-spacing:-0.582px;">UTF-8</span>
<span class="t" style="left:1814px;top:1025.50px;font-size:16px;color:#000;letter-spacing:-0.292px;">4 spaces</span>
<span class="t" style="left:430px;top:111.00px;font-size:18px;color:#0033b3;font-family:'Liberation Mono',monospace;letter-spacing:-0.8px;">public class</span>
<span class="t" style="left:560px;top:111.00px;font-size:18px;color:#080808;font-family:'Liberation Mono',monospace;letter-spacing:-0.8px;">Code0 {</span>
<span class="t" style="left:470px;top:138.50px;font-size:18px;color:#0033b3;font-family:'Liberation Mono',monospace;letter-spacing:-0.8px;">public static void</span>
<span class="t" style="left:660px;top:138.50px;font-size:18px;color:#00627a;font-family:'Liberation Mono',monospace;letter-spacing:-0.8px;">main</span>
<span class="t" style="left:700px;top:138.50px;font-size:18px;color:#080808;font-family:'Liberation Mono',monospace;letter-spacing:-0.8px;">(String[] args) {</span>
<span class="t" style="left:510px;top:166.00px;font-size:18px;color:#0033b3;font-family:'Liberation Mono',monospace;letter-spacing:-0.8px;">int</span>
<span class="t" style="left:550px;top:166.00px;font-size:18px;color:#080808;font-family:'Liberation Mono',monospace;letter-spacing:-0.8px;">a = </span>
<span class="t" style="left:590px;top:166.00px;font-size:18px;color:#1750eb;font-family:'Liberation Mono',monospace;letter-spacing:-0.8px;">5</span>
<span class="t" style="left:600px;top:166.00px;font-size:18px;color:#080808;font-family:'Liberation Mono',monospace;letter-spacing:-0.8px;">;</span>
<span class="t" style="left:510px;top:193.50px;font-size:18px;color:#0033b3;font-family:'Liberation Mono',monospace;letter-spacing:-0.8px;">int</span>
<span class="t" style="left:550px;top:193.50px;font-size:18px;color:#080808;font-family:'Liberation Mono',monospace;letter-spacing:-0.8px;">b = a &gt; </span>
<span class="t" style="left:630px;top:193.50px;font-size:18px;color:#1750eb;font-family:'Liberation Mono',monospace;letter-spacing:-0.8px;">0</span>
<span class="t" style="left:650px;top:193.50px;font-size:18px;color:#080808;font-family:'Liberation Mono',monospace;letter-spacing:-0.8px;">? </span>
<span class="t" style="left:670px;top:193.50px;font-size:18px;color:#1750eb;font-family:'Liberation Mono',monospace;letter-spacing:-0.8px;">10</span>
<span class="t" style="left:700px;top:193.50px;font-size:18px;color:#080808;font-family:'Liberation Mono',monospace;letter-spacing:-0.8px;">: </span>
<span class="t" style="left:720px;top:193.50px;font-size:18px;color:#1750eb;font-family:'Liberation Mono',monospace;letter-spacing:-0.8px;">0</span>
<span class="t" style="left:730px;top:193.50px;font-size:18px;color:#080808;font-family:'Liberation Mono',monospace;letter-spacing:-0.8px;">;</span>
<span class="t" style="left:790px;top:193.50px;font-size:18px;color:#8c8c8c;font-family:'Liberation Mono',monospace;font-style:italic;letter-spacing:-0.8px;">//</span>
<span class="t" style="left:510px;top:221.00px;font-size:18px;color:#080808;font-family:'Liberation Mono',monospace;letter-spacing:-0.8px;">System.</span>
<span class="t" style="left:580px;top:221.00px;font-size:18px;color:#871094;font-family:'Liberation Mono',monospace;font-style:italic;letter-spacing:-0.8px;">out</span>
<span class="t" style="left:610px;top:221.00px;font-size:18px;color:#080808;font-family:'Liberation Mono',monospace;letter-spacing:-0.8px;">.println(</span>
<span class="t" style="left:700px;top:221.00px;font-size:18px;color:#067d17;font-family:'Liberation Mono',monospace;letter-spacing:-0.8px;">"a = "</span>
<span class="t" style="left:770px;top:221.00px;font-size:18px;color:#080808;font-family:'Liberation Mono',monospace;letter-spacing:-0.8px;">+ a);</span>
<span class="t" style="left:510px;top:248.50px;font-size:18px;color:#080808;font-family:'Liberation Mono',monospace;letter-spacing:-0.8px;">System.</span>
<span class="t" style="left:580px;top:248.50px;font-size:18px;color:#871094;font-family:'Liberation Mono',monospace;font-style:italic;letter-spacing:-0.8px;">out</span>
<span class="t" style="left:610px;top:248.50px;font-size:18px;color:#080808;font-family:'Liberation Mono',monospace;letter-spacing:-0.8px;">.println(</span>
<span class="t" style="left:700px;top:248.50px;font-size:18px;color:#067d17;font-family:'Liberation Mono',monospace;letter-spacing:-0.8px;">"b = "</span>
<span class="t" style="left:770px;top:248.50px;font-size:18px;color:#080808;font-family:'Liberation Mono',monospace;letter-spacing:-0.8px;">+ b);</span>
<span class="t" style="left:470px;top:276.00px;font-size:18px;color:#080808;font-family:'Liberation Mono',monospace;letter-spacing:-0.8px;">}</span>
<span class="t" style="left:430px;top:303.50px;font-size:18px;color:#080808;font-family:'Liberation Mono',monospace;letter-spacing:-0.8px;">}</span>
<span class="t" style="left:365px;top:110.00px;font-size:16.2px;color:#adadad;">1</span>
<span class="t" style="left:365px;top:137.50px;font-size:16.2px;color:#adadad;">2</span>
<span class="t" style="left:365px;top:165.00px;font-size:16.2px;color:#adadad;">3</span>
<span class="t" style="left:365px;top:192.50px;font-size:16.2px;color:#adadad;">4</span>
<span class="t" style="left:365px;top:220.00px;font-size:16.2px;color:#adadad;">5</span>
<span class="t" style="left:365px;top:247.50px;font-size:16.2px;color:#adadad;">6</span>
<span class="t" style="left:365px;top:275.00px;font-size:16.2px;color:#adadad;">7</span>
<span class="t" style="left:365px;top:302.50px;font-size:16.2px;color:#adadad;">8</span>
<span class="t" style="left:115px;top:582.00px;font-size:18px;color:#080808;font-family:'Liberation Mono',monospace;letter-spacing:-0.8px;">a = 5</span>
<span class="t" style="left:115px;top:609.50px;font-size:18px;color:#080808;font-family:'Liberation Mono',monospace;letter-spacing:-0.8px;">b = 10</span>
<span class="t" style="left:115px;top:664.50px;font-size:18px;color:#00007f;font-family:'Liberation Mono',monospace;letter-spacing:-0.8px;">Process finished with exit code 0</span>
</body></html>
